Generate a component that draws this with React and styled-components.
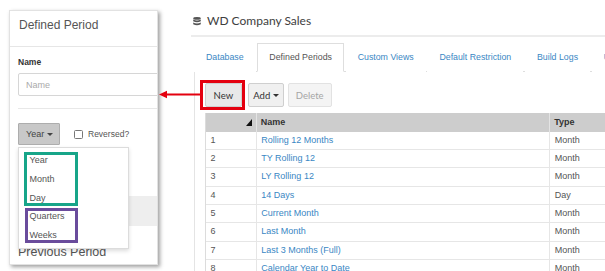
import React from "react";
import styled, { createGlobalStyle } from "styled-components";

const Global = createGlobalStyle`
  html, body { margin: 0; padding: 0; background: #fff; overflow: hidden; }
  body { font-family: "Liberation Sans", Arial, sans-serif; width: 605px; height: 271px; }
  * { box-sizing: border-box; }
`;

const Page = styled.div`
  position: relative;
  display: flex;
  align-items: flex-start;
  width: 605px;
  height: 271px;
  overflow: hidden;
`;

/* ---------- left card ---------- */
const Card = styled.div`
  flex-shrink: 0;
  margin: 10px 0 0 9px;
  width: 149px;
  height: 255px;
  background: #fff;
  border: 1px solid #e2e2e2;
  box-shadow: 2px 2px 4px rgba(0, 0, 0, 0.38);
  overflow: hidden;
`;

const CardHeader = styled.div`
  height: 36px;
  padding: 7px 9px 0;
  line-height: 14px;
  font-size: 12px;
  color: #555;
  border-bottom: 1px solid #e6e6e6;
  white-space: nowrap;
`;

const CardBody = styled.div`
  padding-left: 8px;
`;

const Label = styled.div`
  margin-top: 10px;
  font-size: 8.5px;
  font-weight: bold;
  line-height: 11px;
  color: #333;
`;

const TextInput = styled.input`
  display: block;
  margin-top: 5px;
  width: 200px;
  height: 23px;
  padding: 0 0 0 7px;
  border: 1px solid #d6d6d6;
  border-radius: 2px;
  font-family: "Liberation Sans", Arial, sans-serif;
  font-size: 9px;
  color: #333;
  outline: none;
  &::placeholder { color: #aaa; }
`;

const Divider = styled.div`
  margin-top: 12px;
  height: 1px;
  background: #e8e8e8;
`;

const OptionRow = styled.div`
  margin-top: 14px;
  display: flex;
  align-items: center;
  height: 22px;
`;

const DropWrap = styled.div`
  position: relative;
`;

const DropButton = styled.div`
  width: 42px;
  height: 22px;
  padding-left: 7px;
  display: flex;
  align-items: center;
  gap: 3px;
  background: #c8c8c8;
  border: 1px solid #adadad;
  border-radius: 1px;
  font-size: 9px;
  color: #444;
`;

const Caret = styled.span`
  display: inline-block;
  width: 0;
  height: 0;
  border-left: 3px solid transparent;
  border-right: 3px solid transparent;
  border-top: 3px solid #444;
  margin-top: 1px;
`;

const Check = styled.span`
  margin-left: 14px;
  width: 9px;
  height: 9px;
  border: 1px solid #777;
  border-radius: 1.5px;
  background: #fff;
  margin-top: 1px;
`;

const CheckText = styled.span`
  margin-left: 5px;
  font-size: 8.5px;
  color: #555;
`;

const Menu = styled.div`
  position: absolute;
  top: 24px;
  left: 0;
  width: 111px;
  padding: 3.4px 0;
  background: #fff;
  border: 1px solid #dcdcdc;
  box-shadow: 0 2px 4px rgba(0, 0, 0, 0.14);
  z-index: 2;
`;

const Group = styled.div`
  position: relative;
  &::after {
    content: "";
    position: absolute;
    left: ${(p) => p.$l}px;
    width: ${(p) => 48.5 - p.$l + 4}px;
    top: ${(p) => p.$t}px;
    bottom: ${(p) => p.$b}px;
    border: 3px solid ${(p) => p.$color};
    pointer-events: none;
  }
`;

const MenuItem = styled.div`
  height: 18.65px;
  line-height: 18.65px;
  padding-left: 10.5px;
  font-size: 9px;
  color: #555;
`;

const Band = styled.div`
  margin-top: 51px;
  height: 30px;
  background: #eeeeee;
`;

const SubTitle = styled.div`
  margin-top: 19px;
  font-size: 12.5px;
  line-height: 14px;
  color: #555;
  white-space: nowrap;
`;

/* ---------- main ---------- */
const Main = styled.div`
  flex-shrink: 0;
  margin-left: 33px;
  width: 414px;
  height: 271px;
  overflow: hidden;
`;

const TitleRow = styled.div`
  height: 37px;
  padding: 14px 0 0 2px;
  display: flex;
  align-items: flex-start;
  border-bottom: 2px solid #ececec;
`;

const Title = styled.div`
  margin-left: 6px;
  font-family: Lato, "Liberation Sans", sans-serif;
  font-size: 12px;
  line-height: 14px;
  color: #3e3e3e;
  white-space: nowrap;
`;

const IconBox = styled.div`
  margin-top: 3px;
  width: 8px;
  height: 9px;
  display: flex;
`;

const TabBar = styled.div`
  margin: 6px 0 0 3px;
  height: 29px;
  display: flex;
  border-bottom: 1px solid #dedede;
  white-space: nowrap;
`;

const Tab = styled.div`
  flex-shrink: 0;
  height: 29px;
  line-height: 27px;
  padding: 0 11px;
  margin-right: 1.7px;
  border: 1px solid ${(p) => (p.$active ? "#dedede" : "transparent")};
  border-bottom-color: ${(p) => (p.$active ? "#fff" : "transparent")};
  background: #fff;
  font-size: 8.8px;
  color: ${(p) => (p.$active ? "#555" : "#3a87c4")};
`;

const Panel = styled.div`
  margin-left: 3px;
  padding: 11px 0 0 10px;
  border-left: 1px solid #e4e4e4;
  height: 300px;
`;

const Toolbar = styled.div`
  display: flex;
  align-items: center;
`;

const Btn = styled.div`
  position: relative;
  width: ${(p) => p.$w}px;
  margin-right: ${(p) => p.$mr || 0}px;
  height: 24px;
  display: flex;
  align-items: center;
  justify-content: center;
  gap: 3px;
  background: ${(p) => (p.$disabled ? "#f4f4f4" : p.$pressed ? "#e8e8e8" : "#f0f0f0")};
  border: 1px solid ${(p) => (p.$disabled ? "#e2e2e2" : "#cfcfcf")};
  border-radius: 2px;
  font-family: Lato, "Liberation Sans", sans-serif;
  font-size: 9.5px;
  color: ${(p) => (p.$disabled ? "#a5a5a5" : "#333")};
  ${(p) =>
    p.$highlight &&
    `&::after {
      content: "";
      position: absolute;
      left: -6px; right: -4px; top: -4.5px; bottom: -3.5px;
      border: 3px solid #e4000f;
    }`}
`;

const BtnCaret = styled(Caret)`
  border-top-color: #333;
`;

const Grid = styled.div`
  margin-top: 5.7px;
  width: 430px;
  display: grid;
  grid-template-columns: 50.7px 293.6px 86px;
  border-left: 1px solid #dcdcdc;
`;

const HeadCell = styled.div`
  height: 19px;
  background: #cdcdcd;
  border-right: 1px solid #e4e4e4;
  display: flex;
  align-items: center;
  justify-content: ${(p) => (p.$end ? "flex-end" : "flex-start")};
  padding: 0 4px;
  font-size: 9px;
  font-weight: bold;
  color: #333;
`;

const Cell = styled.div`
  height: 18.35px;
  line-height: 17.35px;
  padding-left: 4.5px;
  border-bottom: 1px solid #e6e6e6;
  border-right: 1px solid #e6e6e6;
  font-size: 9px;
  color: ${(p) => (p.$link ? "#3a87c4" : "#555")};
  white-space: nowrap;
`;

const ArrowSvg = styled.svg`
  position: absolute;
  left: 158px;
  top: 89px;
  z-index: 3;
`;

const rows = [
  ["1", "Rolling 12 Months", "Month"],
  ["2", "TY Rolling 12", "Month"],
  ["3", "LY Rolling 12", "Month"],
  ["4", "14 Days", "Day"],
  ["5", "Current Month", "Month"],
  ["6", "Last Month", "Month"],
  ["7", "Last 3 Months (Full)", "Month"],
  ["8", "Calendar Year to Date", "Month"],
];

const tabs = ["Database", "Defined Periods", "Custom Views", "Default Restriction", "Build Logs", "Users"];

export default function App() {
  return (
    <Page>
      <Global />
      <Card>
        <CardHeader>Defined Period</CardHeader>
        <CardBody>
          <Label>Name</Label>
          <TextInput placeholder="Name" readOnly />
          <Divider />
          <OptionRow>
            <DropWrap>
              <DropButton>
                Year <Caret />
              </DropButton>
              <Menu>
                <Group $color="#17a589" $l={5} $t={0.3} $b={1.4}>
                  <MenuItem>Year</MenuItem>
                  <MenuItem>Month</MenuItem>
                  <MenuItem>Day</MenuItem>
                </Group>
                <Group $color="#6a4c9c" $l={6} $t={0.6} $b={1.6}>
                  <MenuItem>Quarters</MenuItem>
                  <MenuItem>Weeks</MenuItem>
                </Group>
              </Menu>
            </DropWrap>
            <Check />
            <CheckText>Reversed?</CheckText>
          </OptionRow>
          <Band />
          <SubTitle>Previous Period</SubTitle>
        </CardBody>
      </Card>

      <Main>
        <TitleRow>
          <IconBox>
            <svg width="8" height="9" viewBox="0 0 8 9">
              <ellipse cx="4" cy="1.4" rx="3.8" ry="1.4" fill="#555" />
              <path d="M0.2 2.6 Q4 4.6 7.8 2.6 V4.2 Q4 6.2 0.2 4.2 Z" fill="#555" />
              <path d="M0.2 5.4 Q4 7.4 7.8 5.4 V7.3 Q4 9.4 0.2 7.3 Z" fill="#555" />
            </svg>
          </IconBox>
          <Title>WD Company Sales</Title>
        </TitleRow>
        <TabBar>
          {tabs.map((t) => (
            <Tab key={t} $active={t === "Defined Periods"}>
              {t}
            </Tab>
          ))}
        </TabBar>
        <Panel>
          <Toolbar>
            <Btn $w={36.7} $mr={6.6} $pressed $highlight>
              New
            </Btn>
            <Btn $w={36} $mr={3.4}>
              Add <BtnCaret />
            </Btn>
            <Btn $w={44} $disabled>
              Delete
            </Btn>
          </Toolbar>
          <Grid>
            <HeadCell $end>
              <svg width="6" height="7" viewBox="0 0 6 7">
                <polygon points="6,0 6,7 0,7" fill="#111" />
              </svg>
            </HeadCell>
            <HeadCell>Name</HeadCell>
            <HeadCell>Type</HeadCell>
            {rows.map(([n, name, type]) => (
              <React.Fragment key={n}>
                <Cell>{n}</Cell>
                <Cell $link>{name}</Cell>
                <Cell>{type}</Cell>
              </React.Fragment>
            ))}
          </Grid>
        </Panel>
      </Main>

      <ArrowSvg width="42" height="12" viewBox="0 0 42 12">
        <line x1="6" y1="5.5" x2="42" y2="5.5" stroke="#e4000f" strokeWidth="2.2" />
        <polygon points="1,5.5 9,1.8 9,9.2" fill="#e4000f" />
      </ArrowSvg>
    </Page>
  );
}
